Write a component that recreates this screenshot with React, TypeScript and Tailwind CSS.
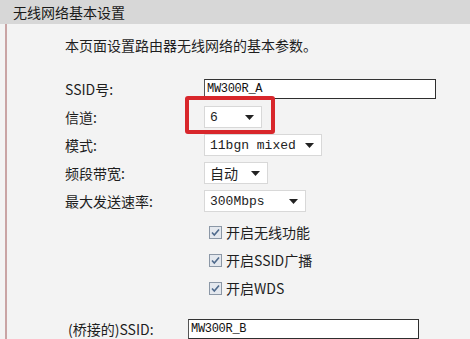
import React from 'react';

const cjk = { fontFamily: '"Noto Sans CJK SC", "Liberation Sans", sans-serif' };
const mono = { fontFamily: '"Liberation Mono", "Noto Sans CJK SC", monospace' };

const Arrow = () => (
  <svg width="9" height="5" viewBox="0 0 9 5" className="shrink-0">
    <path d="M0 0 L9 0 L4.5 5 Z" fill="#222" />
  </svg>
);

const Select = ({ value, width, cjkText }: { value: string; width: string; cjkText?: boolean }) => (
  <div className={`flex h-[22px] items-center justify-between border border-[#d8d8d8] bg-white pl-[5px] pr-[7px] ${width}`}>
    <span className={`${cjkText ? 'text-[14px]' : 'text-[13px]'} leading-none text-[#222]`} style={cjkText ? cjk : mono}>{value}</span>
    <Arrow />
  </div>
);

const TextBox = ({ value, width }: { value: string; width: string }) => (
  <div className={`flex h-[20px] items-center border border-[#2e2e2e] border-l-[#555] border-t-[#333] bg-white pl-[2px] ${width}`}>
    <span className="text-[12px] leading-none tracking-[-0.3px] text-[#111]" style={mono}>{value}</span>
  </div>
);

const Check = ({ label }: { label: string }) => (
  <div className="flex h-[28px] items-center">
    <svg width="13" height="13" viewBox="0 0 13 13" className="ml-[5px] mr-[4px]">
      <rect x="0.5" y="0.5" width="12" height="12" fill="#e4e8ee" stroke="#8b97a6" />
      <path d="M3 6.5 L5.3 9 L10 3.5" fill="none" stroke="#4f6a8c" strokeWidth="1.6" />
    </svg>
    <span className="text-[14px] text-[#1e1e1e]" style={cjk}>{label}</span>
  </div>
);

const Row = ({ label, children }: { label: string; children: React.ReactNode }) => (
  <div className="flex h-[28px] items-center">
    <div className="w-[139px] shrink-0 text-[14px] text-[#1e1e1e]" style={cjk}>{label}</div>
    {children}
  </div>
);

export default function App() {
  return (
    <div className="h-[339px] w-[470px] overflow-hidden bg-[#f3f3f3]">
      <div className="flex h-[24px] items-center bg-[#d7d7d7] pl-[13px] text-[14px] text-[#1a1a1a]" style={cjk}>
        无线网络基本设置
      </div>
      <div className="relative ml-[5px] h-[315px] border-l-2 border-[#c9a4a4] pl-[58px] pt-[11px]">
        <div className="h-[20px] text-[14px] leading-[20px] text-[#1e1e1e]" style={cjk}>
          本页面设置路由器无线网络的基本参数。
        </div>
        <div className="mt-[20px]">
          <Row label="SSID号:">
            <TextBox value="MW300R_A" width="w-[232px]" />
          </Row>
          <Row label="信道:">
            <Select value="6" width="w-[58px]" />
          </Row>
          <Row label="模式:">
            <Select value="11bgn mixed" width="w-[118px]" />
          </Row>
          <Row label="频段带宽:">
            <Select value="自动" width="w-[64px]" cjkText />
          </Row>
          <Row label="最大发送速率:">
            <Select value="300Mbps" width="w-[102px]" />
          </Row>
          <div className="mt-[3px] pl-[139px]">
            <Check label="开启无线功能" />
            <Check label="开启SSID广播" />
            <Check label="开启WDS" />
          </div>
          <div className="mt-[11px] flex h-[28px] items-start pt-[6px]">
            <div className="w-[123px] shrink-0 pl-[3px] text-[14px] text-[#1e1e1e]" style={cjk}>(桥接的)SSID:</div>
            <TextBox value="MW300R_B" width="w-[231px]" />
          </div>
        </div>
        <div className="pointer-events-none absolute left-[178px] top-[72px] h-[38px] w-[90px] rounded-[3px] border-4 border-[#d8262b]" />
      </div>
    </div>
  );
}
